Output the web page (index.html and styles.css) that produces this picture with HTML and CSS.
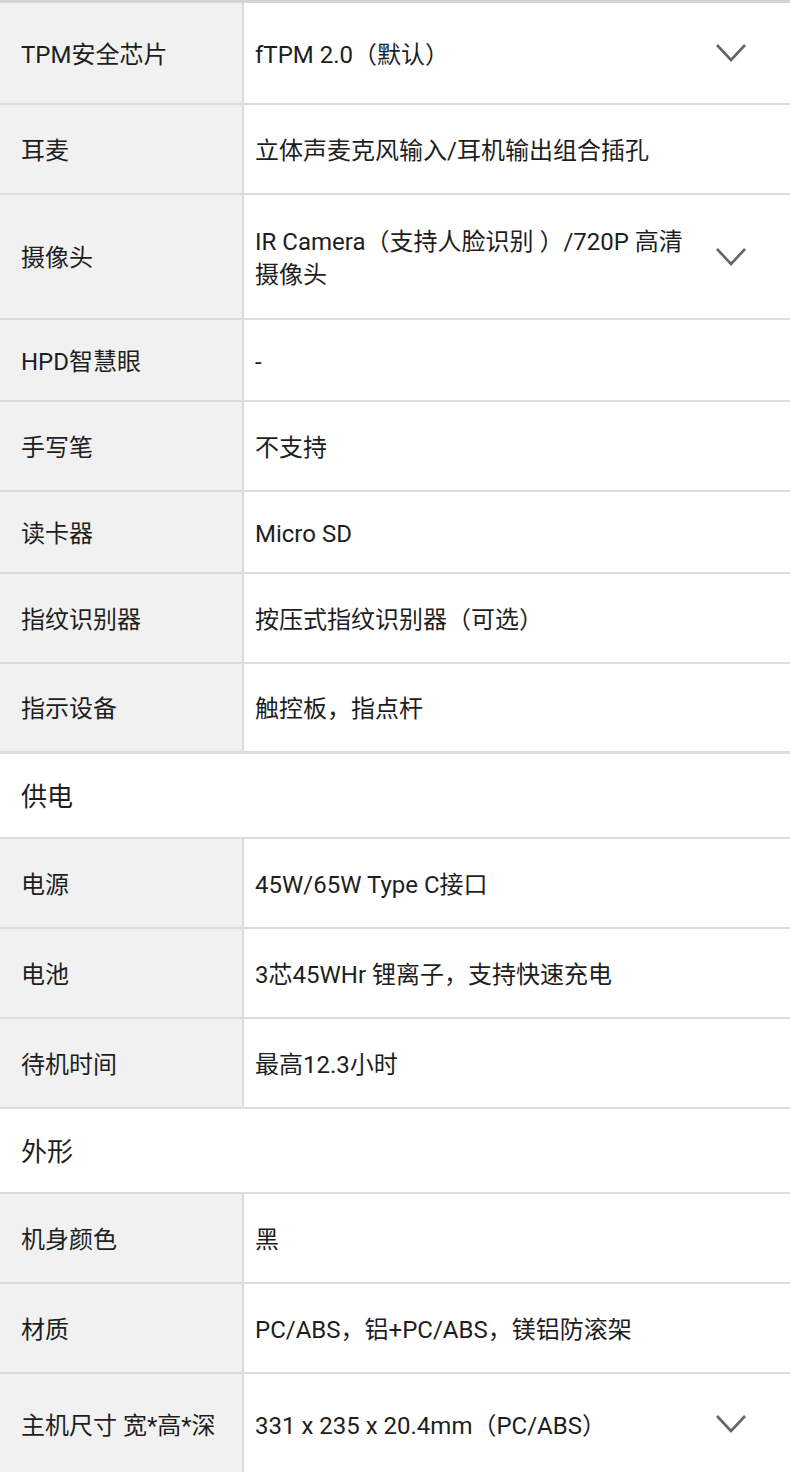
FILE: index.html
```html
<!DOCTYPE html>
<html lang="zh-CN">
<head>
<meta charset="utf-8">
<title>规格参数</title>
<link rel="stylesheet" href="styles.css">
</head>
<body>
<div class="specs">
  <div class="row row--tall">
    <div class="label">TPM安全芯片</div>
    <div class="value"><span class="text">fTPM 2.0（默认）</span><svg class="chev" viewBox="0 0 32 20"><path d="M2 2 L16 17 L30 2"/></svg></div>
  </div>
  <div class="row">
    <div class="label">耳麦</div>
    <div class="value"><span class="text">立体声麦克风输入/耳机输出组合插孔</span></div>
  </div>
  <div class="row row--double">
    <div class="label">摄像头</div>
    <div class="value"><span class="text">IR Camera（支持人脸识别 ）/720P 高清摄像头</span><svg class="chev" viewBox="0 0 32 20"><path d="M2 2 L16 17 L30 2"/></svg></div>
  </div>
  <div class="row row--short">
    <div class="label">HPD智慧眼</div>
    <div class="value"><span class="text">-</span></div>
  </div>
  <div class="row">
    <div class="label">手写笔</div>
    <div class="value"><span class="text">不支持</span></div>
  </div>
  <div class="row row--short">
    <div class="label">读卡器</div>
    <div class="value"><span class="text">Micro SD</span></div>
  </div>
  <div class="row">
    <div class="label">指纹识别器</div>
    <div class="value"><span class="text">按压式指纹识别器（可选）</span></div>
  </div>
  <div class="row row--end">
    <div class="label">指示设备</div>
    <div class="value"><span class="text">触控板，指点杆</span></div>
  </div>
  <div class="section">供电</div>
  <div class="row">
    <div class="label">电源</div>
    <div class="value"><span class="text">45W/65W Type C接口</span></div>
  </div>
  <div class="row">
    <div class="label">电池</div>
    <div class="value"><span class="text">3芯45WHr 锂离子，支持快速充电</span></div>
  </div>
  <div class="row">
    <div class="label">待机时间</div>
    <div class="value"><span class="text">最高12.3小时</span></div>
  </div>
  <div class="section">外形</div>
  <div class="row">
    <div class="label">机身颜色</div>
    <div class="value"><span class="text">黑</span></div>
  </div>
  <div class="row">
    <div class="label">材质</div>
    <div class="value"><span class="text">PC/ABS，铝+PC/ABS，镁铝防滚架</span></div>
  </div>
  <div class="row row--tall">
    <div class="label">主机尺寸 宽*高*深</div>
    <div class="value"><span class="text">331 x 235 x 20.4mm（PC/ABS）</span><svg class="chev" viewBox="0 0 32 20"><path d="M2 2 L16 17 L30 2"/></svg></div>
  </div>
</div>
</body>
</html>
```

FILE: styles.css
```css
* { box-sizing: border-box; }
html, body { margin: 0; padding: 0; background: #fff; }
body {
  font-family: Roboto, "Noto Sans CJK SC", "Noto Sans", sans-serif;
  color: #1e1e1e;
  font-size: 24px;
  line-height: 33px;
}
.specs {
  display: flex;
  flex-direction: column;
  border-top: 3px solid #d4d4d4;
}
.row {
  display: grid;
  grid-template-columns: 244px 1fr;
  min-height: 90px;
  border-bottom: 2px solid #dcdcdc;
}
.row--tall { min-height: 102px; }
.row--short { min-height: 82px; }
.row--double { min-height: 125px; }
.row--end { border-bottom-width: 3px; min-height: 90px; }
.label {
  background: #f1f1f1;
  border-right: 2px solid #dcdcdc;
  padding: 4px 10px 0 21px;
  display: flex;
  align-items: center;
}
.value {
  display: flex;
  align-items: center;
  padding: 4px 43px 0 11px;
  gap: 20px;
}
.text { flex: 1; }
.chev {
  flex: none;
  width: 32px;
  height: 20px;
  margin-top: -4px;
  fill: none;
  stroke: #666;
  stroke-width: 2.6;
}
.section {
  display: flex;
  align-items: center;
  min-height: 85px;
  padding: 4px 21px 0;
  font-size: 26px;
  border-bottom: 2px solid #dcdcdc;
}
```
